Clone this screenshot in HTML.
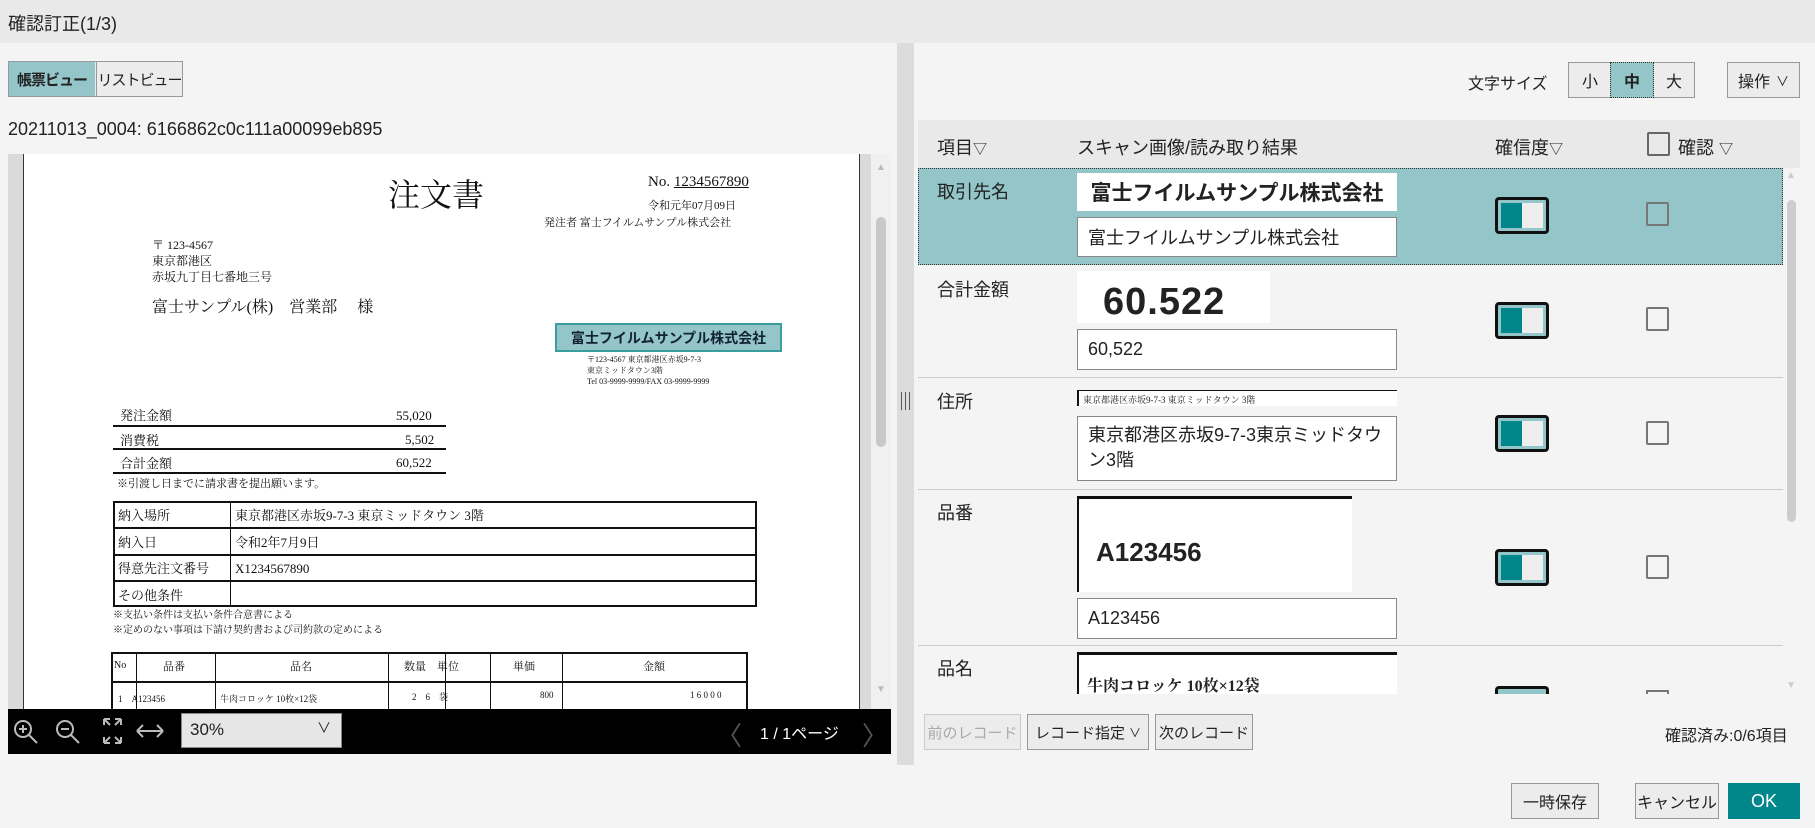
<!DOCTYPE html>
<html><head><meta charset="utf-8">
<style>
*{box-sizing:border-box;margin:0;padding:0}
body{width:1815px;height:828px;overflow:hidden;background:#f4f4f4;font-family:"Liberation Sans","Noto Sans CJK JP",sans-serif;color:#222;position:relative}
.a{position:absolute;white-space:nowrap}
.btn{position:absolute;border:1px solid #999;background:#ececec;font-size:17px;display:flex;align-items:center;justify-content:center;color:#222;white-space:nowrap}
.doc{font-family:"Liberation Serif","Noto Serif CJK SC",serif;color:#111;position:absolute;white-space:nowrap}
.cb{position:absolute;width:23px;height:24px;border:2px solid #777;border-radius:2px}
.tg{position:absolute;width:54px;height:37px;border:3px solid #111;border-radius:4px;background:#93c5c9;padding:3px}
.tg i{display:block;width:100%;height:100%;background:linear-gradient(90deg,#00868b 0 50%,#eeeeee 50%)}
.inp{position:absolute;background:#fff;border:1px solid #888;font-size:18px;padding:0 10px;display:flex;align-items:center}
.lbl{position:absolute;font-size:18px;left:937px}
.sep{position:absolute;left:918px;width:865px;height:1px;background:#ccc}
</style></head><body>
<div class="a" style="left:0;top:0;width:1815px;height:43px;background:#e9e9e9"></div>
<div class="a" style="left:8px;top:10px;font-size:18px">確認訂正(1/3)</div>
<div class="a" style="left:897px;top:43px;width:17px;height:722px;background:#dcdcdc"></div>
<div class="a" style="left:901px;top:392px;width:9px;height:18px;border-left:1px solid #555;border-right:1px solid #555"><div style="margin-left:3px;width:1px;height:18px;background:#555"></div></div>

<div class="a" style="left:8px;top:61px;width:175px;height:36px;border:1px solid #999;background:#ececec"></div>
<div class="a" style="left:9px;top:62px;width:86px;height:34px;background:#93c5c9;font-size:15px;font-weight:bold;display:flex;align-items:center;justify-content:center;letter-spacing:-1px">帳票ビュー</div>
<div class="a" style="left:96px;top:62px;width:86px;height:34px;font-size:15px;display:flex;align-items:center;justify-content:center;border-left:1px solid #999;letter-spacing:-1px">リストビュー</div>
<div class="a" style="left:8px;top:119px;font-size:18px">20211013_0004: 6166862c0c111a00099eb895</div>

<div class="a" style="left:8px;top:154px;width:883px;height:555px;background:#dadada;overflow:hidden">
 <div class="a" style="left:15px;top:0;width:837px;height:555px;background:#fff;border-left:1px solid #333;border-right:1px solid #333"></div>
 <div class="a" style="left:863px;top:0;width:20px;height:555px;background:#f0f0f0"></div>
 <div class="a" style="left:868px;top:63px;width:10px;height:230px;background:#c8c8c8;border-radius:5px"></div>
 <div class="a" style="left:868px;top:8px;font-size:10px;color:#bbb">▲</div>
 <div class="a" style="left:868px;top:530px;font-size:10px;color:#bbb">▼</div>
</div>
<div class="doc" style="left:388px;top:170px;font-size:32px">注文書</div>
<div class="doc" style="left:648px;top:174px;font-size:15px">No. <u>1234567890</u></div>
<div class="doc" style="left:648px;top:197px;font-size:11px">令和元年07月09日</div>
<div class="doc" style="left:544px;top:214px;font-size:11px">発注者 富士フイルムサンプル株式会社</div>
<div class="doc" style="left:152px;top:237px;font-size:12px;line-height:16px">〒 123-4567<br>東京都港区<br>赤坂九丁目七番地三号</div>
<div class="doc" style="left:152px;top:294px;font-size:16px">富士サンプル(株)　営業部　 様</div>
<div class="a" style="left:555px;top:323px;width:227px;height:29px;background:#93c5c9;border:2px solid #3a9ea0;font-size:14px;font-weight:bold;display:flex;align-items:center;justify-content:center;color:#123">富士フイルムサンプル株式会社</div>
<div class="doc" style="left:587px;top:354px;font-size:8px;line-height:11px">〒123-4567 東京都港区赤坂9-7-3<br>東京ミッドタウン3階<br>Tel 03-9999-9999/FAX 03-9999-9999</div>
<div class="doc" style="left:120px;top:405px;font-size:13px">発注金額</div><div class="doc" style="left:396px;top:408px;font-size:13px">55,020</div>
<div class="a" style="left:113px;top:425px;width:333px;height:2px;background:#111"></div>
<div class="doc" style="left:120px;top:430px;font-size:13px">消費税</div><div class="doc" style="left:405px;top:432px;font-size:13px">5,502</div>
<div class="a" style="left:113px;top:448px;width:333px;height:2px;background:#111"></div>
<div class="doc" style="left:120px;top:453px;font-size:13px">合計金額</div><div class="doc" style="left:396px;top:455px;font-size:13px">60,522</div>
<div class="a" style="left:113px;top:472px;width:333px;height:2px;background:#111"></div>
<div class="doc" style="left:117px;top:475px;font-size:11px">※引渡し日までに請求書を提出願います。</div>
<div class="a" style="left:113px;top:501px;width:644px;height:106px;border:2px solid #111"></div>
<div class="a" style="left:230px;top:501px;width:1px;height:106px;background:#111"></div>
<div class="a" style="left:113px;top:527px;width:644px;height:2px;background:#111"></div>
<div class="a" style="left:113px;top:554px;width:644px;height:2px;background:#111"></div>
<div class="a" style="left:113px;top:580px;width:644px;height:2px;background:#111"></div>
<div class="doc" style="left:118px;top:503px;font-size:13px;line-height:26.5px">納入場所<br>納入日<br>得意先注文番号<br>その他条件</div>
<div class="doc" style="left:235px;top:503px;font-size:13px;line-height:26.5px">東京都港区赤坂9-7-3 東京ミッドタウン 3階<br>令和2年7月9日<br>X1234567890</div>
<div class="doc" style="left:113px;top:608px;font-size:10px;line-height:15px">※支払い条件は支払い条件合意書による<br>※定めのない事項は下請け契約書および司約款の定めによる</div>
<div class="a" style="left:111px;top:652px;width:637px;height:57px;border:2px solid #111;border-bottom:none"></div>
<div class="a" style="left:111px;top:681px;width:637px;height:2px;background:#111"></div>
<div class="a" style="left:136px;top:652px;width:1px;height:57px;background:#111"></div>
<div class="a" style="left:215px;top:652px;width:1px;height:57px;background:#111"></div>
<div class="a" style="left:388px;top:652px;width:1px;height:57px;background:#111"></div>
<div class="a" style="left:445px;top:652px;width:1px;height:57px;background:#111"></div>
<div class="a" style="left:490px;top:652px;width:1px;height:57px;background:#111"></div>
<div class="a" style="left:562px;top:652px;width:1px;height:57px;background:#111"></div>
<div class="doc" style="left:114px;top:660px;font-size:10px">No</div>
<div class="doc" style="left:163px;top:658px;font-size:11px">品番</div>
<div class="doc" style="left:290px;top:658px;font-size:11px">品名</div>
<div class="doc" style="left:404px;top:658px;font-size:11px">数量　単位</div>
<div class="doc" style="left:513px;top:658px;font-size:11px">単価</div>
<div class="doc" style="left:643px;top:658px;font-size:11px">金額</div>
<div class="doc" style="left:118px;top:692px;font-size:9px">1　A123456</div>
<div class="doc" style="left:220px;top:692px;font-size:9px">牛肉コロッケ 10枚×12袋</div>
<div class="doc" style="left:412px;top:690px;font-size:9px">2　6　袋</div>
<div class="doc" style="left:540px;top:690px;font-size:9px">800</div>
<div class="doc" style="left:690px;top:690px;font-size:9px">1 6 0 0 0</div>

<div class="a" style="left:8px;top:709px;width:883px;height:45px;background:#000"></div>
<svg class="a" style="left:8px;top:709px" width="170" height="45" fill="none" stroke="#bbb" stroke-width="2">
 <circle cx="15" cy="20" r="8"/><path d="M21 26l8 8M11 20h8M15 16v8"/>
 <circle cx="57" cy="20" r="8"/><path d="M63 26l8 8M53 20h8"/>
 <path d="M96 10h6M96 10v6M96 10l6 6M113 10h-6M113 10v6M113 10l-6 6M96 34h6M96 34v-6M96 34l6-6M113 34h-6M113 34v-6M113 34l-6-6"/>
 <path d="M129 22h26M129 22l6-6M129 22l6 6M155 22l-6-6M155 22l-6 6"/>
</svg>
<div class="a" style="left:181px;top:713px;width:161px;height:35px;background:#e6e6e6;border:1px solid #888;font-size:17px;padding:6px 8px">30%<span style="position:absolute;right:10px;top:4px;font-size:14px">∨</span></div>
<div class="a" style="left:716px;top:716px;color:#555;font-size:26px">〈</div>
<div class="a" style="left:760px;top:720px;color:#fff;font-size:16px">1 / 1ページ</div>
<div class="a" style="left:862px;top:716px;color:#555;font-size:26px">〉</div>

<div class="a" style="left:1468px;top:70px;font-size:16px">文字サイズ</div>
<div class="a" style="left:1568px;top:62px;width:127px;height:36px;border:1px solid #999;background:#ececec"></div>
<div class="a" style="left:1569px;top:63px;width:42px;height:34px;font-size:16px;display:flex;align-items:center;justify-content:center">小</div>
<div class="a" style="left:1610px;top:62px;width:44px;height:36px;background:#93c5c9;border:1px dotted #333;font-size:16px;font-weight:bold;display:flex;align-items:center;justify-content:center">中</div>
<div class="a" style="left:1654px;top:63px;width:40px;height:34px;font-size:16px;display:flex;align-items:center;justify-content:center">大</div>
<div class="btn" style="left:1727px;top:62px;width:73px;height:36px;font-size:16px">操作 <span style="font-size:13px;margin-left:6px">∨</span></div>

<div class="a" style="left:918px;top:120px;width:882px;height:48px;background:#e9e9e9"></div>
<div class="a" style="left:937px;top:134px;font-size:18px">項目<span style="font-size:14px">▽</span></div>
<div class="a" style="left:1077px;top:134px;font-size:18px">スキャン画像/読み取り結果</div>
<div class="a" style="left:1495px;top:134px;font-size:18px">確信度<span style="font-size:14px">▽</span></div>
<div class="cb" style="left:1647px;top:132px;height:24px;border-color:#666"></div>
<div class="a" style="left:1678px;top:134px;font-size:18px">確認 <span style="font-size:14px">▽</span></div>

<div class="a" style="left:918px;top:168px;width:865px;height:97px;background:#93c5c9;border:1px dotted #333"></div>
<div class="lbl" style="top:178px">取引先名</div>
<div class="a" style="left:1077px;top:173px;width:320px;height:38px;background:#fff;font-size:21px;font-weight:bold;display:flex;align-items:center;justify-content:center">富士フイルムサンプル株式会社</div>
<div class="inp" style="left:1077px;top:217px;width:320px;height:40px">富士フイルムサンプル株式会社</div>
<div class="tg" style="left:1495px;top:197px"><i></i></div>
<div class="cb" style="left:1646px;top:202px"></div>
<div class="lbl" style="top:276px">合計金額</div>
<div class="a" style="left:1077px;top:271px;width:193px;height:52px;background:#fff;font-size:38px;font-weight:bold;font-family:'Liberation Sans',sans-serif;padding-left:26px;line-height:62px;overflow:hidden;letter-spacing:1px">60.522</div>
<div class="inp" style="left:1077px;top:329px;width:320px;height:41px">60,522</div>
<div class="tg" style="left:1495px;top:302px"><i></i></div>
<div class="cb" style="left:1646px;top:307px"></div>
<div class="sep" style="top:377px"></div>
<div class="lbl" style="top:388px">住所</div>
<div class="a" style="left:1077px;top:390px;width:320px;height:16px;background:#fff;border-top:1px solid #111;border-left:2px solid #111;font-size:9px;font-family:'Liberation Serif','Noto Serif CJK SC',serif;padding:2px 4px">東京都港区赤坂9-7-3 東京ミッドタウン 3階</div>
<div class="inp" style="left:1077px;top:416px;width:320px;height:65px;line-height:25px;align-items:flex-start;padding-top:6px;white-space:normal">東京都港区赤坂9-7-3東京ミッドタウン3階</div>
<div class="tg" style="left:1495px;top:415px"><i></i></div>
<div class="cb" style="left:1646px;top:421px"></div>
<div class="sep" style="top:489px"></div>
<div class="lbl" style="top:499px">品番</div>
<div class="a" style="left:1077px;top:496px;width:275px;height:96px;background:#fff;border-top:3px solid #111;border-left:2px solid #111"></div>
<div class="a" style="left:1096px;top:537px;font-size:26px;font-family:'Liberation Sans',sans-serif;font-weight:bold">A123456</div>
<div class="inp" style="left:1077px;top:598px;width:320px;height:41px">A123456</div>
<div class="tg" style="left:1495px;top:549px"><i></i></div>
<div class="cb" style="left:1646px;top:555px"></div>
<div class="sep" style="top:645px"></div>
<div class="lbl" style="top:655px">品名</div>
<div class="a" style="left:1077px;top:652px;width:320px;height:42px;background:#fff;border-top:3px solid #111;border-left:2px solid #111;font-size:16px;font-weight:bold;font-family:'Liberation Serif','Noto Serif CJK SC',serif;padding:18px 8px 0;overflow:hidden">牛肉コロッケ 10枚×12袋</div>
<div class="a" style="left:1495px;top:686px;width:54px;height:8px;border:3px solid #111;border-bottom:none;border-radius:4px 4px 0 0;background:#93c5c9"></div>
<div class="a" style="left:1646px;top:690px;width:23px;height:4px;border:2px solid #777;border-bottom:none"></div>
<div class="a" style="left:1783px;top:168px;width:17px;height:526px;background:#f4f4f4"></div>
<div class="a" style="left:1787px;top:200px;width:9px;height:322px;background:#cdcdcd;border-radius:5px"></div>
<div class="a" style="left:1786px;top:170px;font-size:10px;color:#ccc">▲</div>
<div class="a" style="left:1786px;top:680px;font-size:10px;color:#ccc">▼</div>

<div class="btn" style="left:924px;top:714px;width:97px;height:36px;font-size:15px;color:#aaa;border-color:#ccc">前のレコード</div>
<div class="btn" style="left:1027px;top:714px;width:122px;height:36px;font-size:15px">レコード指定 <span style="font-size:12px;margin-left:4px">∨</span></div>
<div class="btn" style="left:1155px;top:714px;width:98px;height:36px;font-size:15px">次のレコード</div>
<div class="a" style="left:1665px;top:722px;font-size:16px">確認済み:0/6項目</div>

<div class="btn" style="left:1511px;top:783px;width:88px;height:36px;font-size:16px">一時保存</div>
<div class="btn" style="left:1635px;top:783px;width:84px;height:36px;font-size:16px">キャンセル</div>
<div class="a" style="left:1728px;top:783px;width:72px;height:36px;background:#00868b;color:#fff;font-size:18px;display:flex;align-items:center;justify-content:center">OK</div>
</body></html>
